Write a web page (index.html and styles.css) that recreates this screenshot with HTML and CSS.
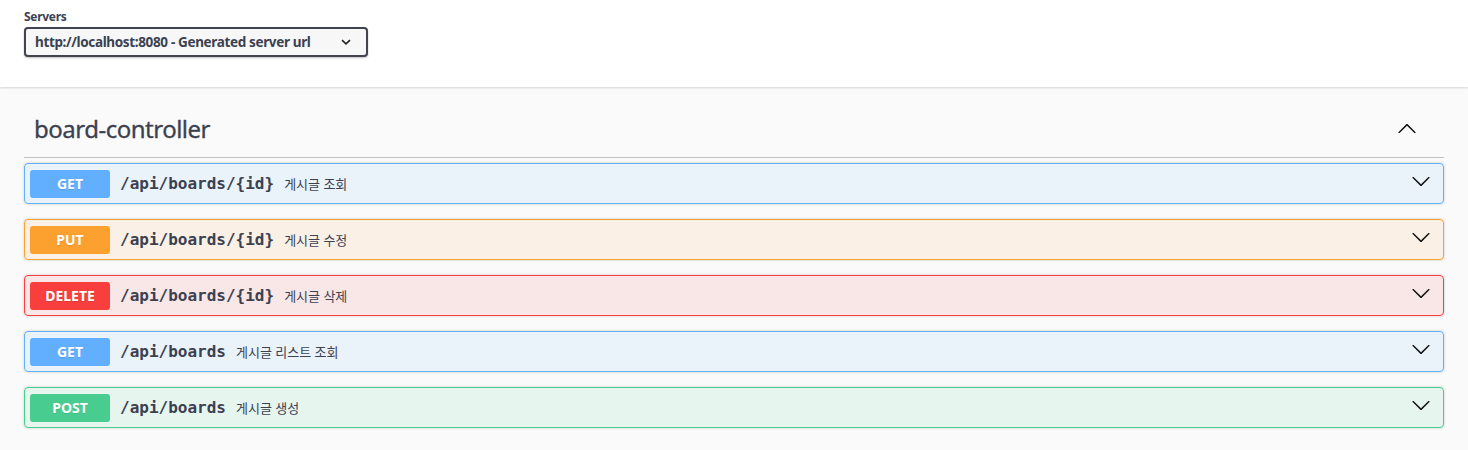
FILE: index.html
```html
<!DOCTYPE html>
<html lang="ko">
<head>
<meta charset="utf-8">
<title>Swagger UI</title>
<link rel="stylesheet" href="styles.css">
</head>
<body>
<div class="scheme-container">
  <div class="wrapper">
    <div class="servers-title">Servers</div>
    <div class="server-select">
      <span>http://localhost:8080 - Generated server url</span>
      <svg class="select-arrow" width="12" height="8" viewBox="0 0 12 8"><path d="M2 2.2l4 3.6 4-3.6" fill="none" stroke="#222" stroke-width="1.6"/></svg>
    </div>
  </div>
</div>
<div class="main">
  <div class="wrapper">
    <div class="tag-section">
      <h3 class="opblock-tag">
        <span class="tag-name">board-controller</span>
        <svg class="arrow up" width="20" height="20" viewBox="0 0 20 20"><path d="M17.418 6.109c.272-.268.709-.268.979 0s.271.701 0 .969l-7.908 7.83c-.27.268-.707.268-.979 0l-7.908-7.830c-.27-.268-.27-.701 0-.969.271-.268.709-.268.979 0L10 13.25l7.418-7.141z"/></svg>
      </h3>

      <div class="opblock get">
        <span class="method">GET</span>
        <span class="path">/api/boards/{id}</span>
        <span class="desc">게시글 조회</span>
        <svg class="arrow down" width="20" height="20" viewBox="0 0 20 20"><path d="M17.418 6.109c.272-.268.709-.268.979 0s.271.701 0 .969l-7.908 7.83c-.27.268-.707.268-.979 0l-7.908-7.83c-.27-.268-.27-.701 0-.969.271-.268.709-.268.979 0L10 13.25l7.418-7.141z"/></svg>
      </div>

      <div class="opblock put">
        <span class="method">PUT</span>
        <span class="path">/api/boards/{id}</span>
        <span class="desc">게시글 수정</span>
        <svg class="arrow down" width="20" height="20" viewBox="0 0 20 20"><path d="M17.418 6.109c.272-.268.709-.268.979 0s.271.701 0 .969l-7.908 7.83c-.27.268-.707.268-.979 0l-7.908-7.83c-.27-.268-.27-.701 0-.969.271-.268.709-.268.979 0L10 13.25l7.418-7.141z"/></svg>
      </div>

      <div class="opblock delete">
        <span class="method">DELETE</span>
        <span class="path">/api/boards/{id}</span>
        <span class="desc">게시글 삭제</span>
        <svg class="arrow down" width="20" height="20" viewBox="0 0 20 20"><path d="M17.418 6.109c.272-.268.709-.268.979 0s.271.701 0 .969l-7.908 7.83c-.27.268-.707.268-.979 0l-7.908-7.83c-.27-.268-.27-.701 0-.969.271-.268.709-.268.979 0L10 13.25l7.418-7.141z"/></svg>
      </div>

      <div class="opblock get">
        <span class="method">GET</span>
        <span class="path">/api/boards</span>
        <span class="desc">게시글 리스트 조회</span>
        <svg class="arrow down" width="20" height="20" viewBox="0 0 20 20"><path d="M17.418 6.109c.272-.268.709-.268.979 0s.271.701 0 .969l-7.908 7.83c-.27.268-.707.268-.979 0l-7.908-7.83c-.27-.268-.27-.701 0-.969.271-.268.709-.268.979 0L10 13.25l7.418-7.141z"/></svg>
      </div>

      <div class="opblock post">
        <span class="method">POST</span>
        <span class="path">/api/boards</span>
        <span class="desc">게시글 생성</span>
        <svg class="arrow down" width="20" height="20" viewBox="0 0 20 20"><path d="M17.418 6.109c.272-.268.709-.268.979 0s.271.701 0 .969l-7.908 7.83c-.27.268-.707.268-.979 0l-7.908-7.83c-.27-.268-.27-.701 0-.969.271-.268.709-.268.979 0L10 13.25l7.418-7.141z"/></svg>
      </div>
    </div>
  </div>
</div>
</body>
</html>
```
FILE: styles.css
```css
* { box-sizing: border-box; }

html, body {
  margin: 0;
  padding: 0;
  background: #fafafa;
  font-family: "Noto Sans", "Noto Sans CJK KR", sans-serif;
  color: #3b4151;
}

.wrapper {
  max-width: 1460px;
  margin: 0 auto;
  padding: 0 20px;
}

.scheme-container {
  background: #fff;
  height: 87px;
  padding-top: 9px;
  box-shadow: 0 1px 2px 0 rgba(0, 0, 0, 0.15);
  position: relative;
  z-index: 1;
}

.servers-title {
  font-size: 12px;
  font-weight: 700;
  line-height: 16px;
  margin-bottom: 2px;
  letter-spacing: -0.3px;
}

.server-select {
  width: 344px;
  height: 30px;
  border: 2px solid #41444e;
  border-radius: 4px;
  background: #f7f7f7;
  box-shadow: 0 1px 2px 0 rgba(0, 0, 0, 0.25);
  display: flex;
  align-items: center;
  justify-content: space-between;
  padding: 0 14px 0 9px;
  font-size: 13.5px;
  font-weight: 700;
  letter-spacing: -0.35px;
  color: #3b4151;
}

.select-arrow { display: block; }

.main {
  padding-top: 14px;
}

.opblock-tag {
  margin: 0 0 5px;
  padding: 10px 20px 10px 10px;
  display: flex;
  align-items: center;
  justify-content: space-between;
  border-bottom: 1px solid rgba(59, 65, 81, 0.3);
  font-size: 24px;
  font-weight: 400;
  line-height: 36px;
  letter-spacing: -0.5px;
  color: #3b4151;
  -webkit-text-stroke: 0.3px #3b4151;
}

.arrow { display: block; flex-shrink: 0; fill: #111; }
.arrow.up { transform: rotate(180deg); margin-right: 7px; }

.opblock {
  display: flex;
  align-items: center;
  height: 41px;
  padding: 0 5px;
  margin-bottom: 15px;
  border: 1px solid;
  border-radius: 4px;
  box-shadow: 0 0 3px rgba(0, 0, 0, 0.19);
}

.method {
  width: 80px;
  height: 28px;
  border-radius: 3px;
  color: #fff;
  font-size: 14px;
  font-weight: 700;
  line-height: 28px;
  text-align: center;
  text-shadow: 0 1px 0 rgba(0, 0, 0, 0.1);
  flex-shrink: 0;
}

.path {
  padding: 0 10px;
  font-family: "DejaVu Sans Mono", monospace;
  font-size: 16px;
  font-weight: 700;
  color: #3b4151;
}

.desc {
  flex: 1;
  font-size: 13px;
  color: #3b4151;
}

.arrow.down { margin: 0 7px 6px 0; }

.get { background: rgba(97, 175, 254, 0.1); border-color: #61affe; }
.get .method { background: #61affe; }

.put { background: rgba(252, 161, 48, 0.1); border-color: #fca130; }
.put .method { background: #fca130; }

.delete { background: rgba(249, 62, 62, 0.1); border-color: #f93e3e; }
.delete .method { background: #f93e3e; }

.post { background: rgba(73, 204, 144, 0.1); border-color: #49cc90; }
.post .method { background: #49cc90; }
```
